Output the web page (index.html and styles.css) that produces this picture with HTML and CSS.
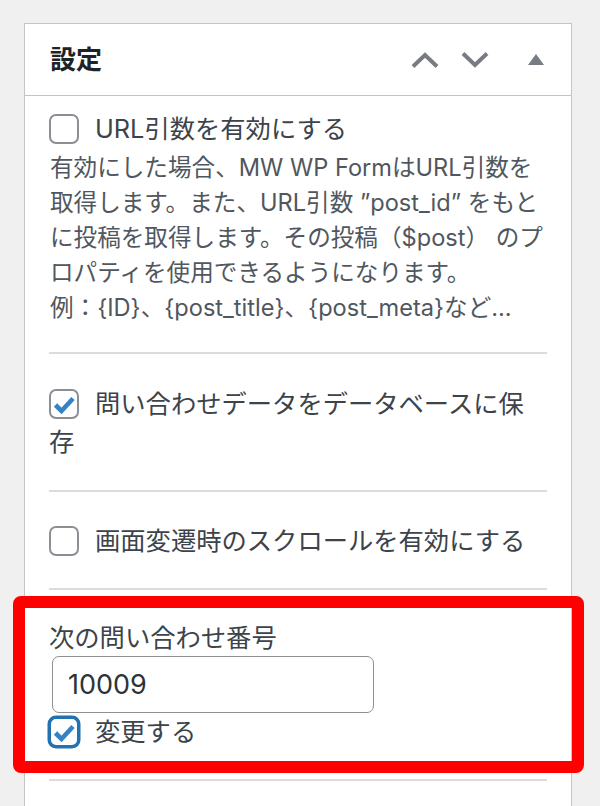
FILE: index.html
```html
<!DOCTYPE html>
<html lang="ja">
<head>
<meta charset="utf-8">
<title>設定</title>
<link rel="stylesheet" href="styles.css">
</head>
<body>
<div class="panel">
  <div class="hdr">
    <h2 class="title">設定</h2>
    <div class="ctrls">
      <svg class="ic ic-up" width="28" height="16" viewBox="0 0 28 16"><path d="M2 14.5 L14 3 L26 14.5" fill="none" stroke="#787c82" stroke-width="4"/></svg>
      <svg class="ic ic-down" width="28" height="16" viewBox="0 0 28 16"><path d="M2 1.5 L14 13 L26 1.5" fill="none" stroke="#787c82" stroke-width="4"/></svg>
      <svg class="ic ic-tri" width="18" height="16" viewBox="0 0 18 16"><polygon points="1,13 9,2 17,13" fill="#787c82"/></svg>
    </div>
  </div>
  <div class="inside">
    <div class="sec sec1">
      <div class="row"><span class="cb"></span><span class="lbl">URL引数を有効にする</span></div>
      <p class="desc">有効にした場合、MW WP FormはURL引数を<br>取得します。また、URL引数 ”post_id” をもと<br>に投稿を取得します。その投稿（$post） のプ<br>ロパティを使用できるようになります。<br>例：{ID}、{post_title}、{post_meta}など...</p>
    </div>
    <div class="sec sec2">
      <div class="row"><span class="cb on"><svg width="30" height="30" viewBox="0 0 30 30"><path d="M6.5 16 L12.5 22 L24 9.5" fill="none" stroke="#3582c4" stroke-width="4.6"/></svg></span><span class="lbl">問い合わせデータをデータベースに保<br>存</span></div>
    </div>
    <div class="sec sec3">
      <div class="row"><span class="cb"></span><span class="lbl">画面変遷時のスクロールを有効にする</span></div>
    </div>
    <div class="sec sec4">
      <div class="field-label">次の問い合わせ番号</div>
      <div class="input">10009</div>
      <div class="row"><span class="cb on focus"><svg width="30" height="30" viewBox="0 0 30 30"><path d="M6.5 16 L12.5 22 L24 9.5" fill="none" stroke="#3582c4" stroke-width="4.6"/></svg></span><span class="lbl">変更する</span></div>
      <div class="highlight"></div>
    </div>
    <div class="sec5"></div>
  </div>
</div>
</body>
</html>
```
FILE: styles.css
```css
* { box-sizing: border-box; }
html, body { margin: 0; padding: 0; }
body {
  background: #f0f0f1;
  font-family: Inter, "Noto Sans CJK JP", sans-serif;
  color: #3c434a;
  overflow: hidden;
}
.panel {
  margin: 23px 28px 0 24px;
  width: 548px;
  background: #fff;
  border: 1px solid #c3c4c7;
  border-bottom: none;
}
.hdr {
  height: 72px;
  border-bottom: 1px solid #c3c4c7;
  display: flex;
  align-items: center;
  padding: 0 26px 0 25px;
}
.title {
  margin: 0;
  font-size: 26px;
  font-weight: 700;
  color: #1d2327;
  line-height: 1;
}
.ctrls {
  margin-left: auto;
  display: flex;
  align-items: center;
}
.ic { display: block; }
.ic-down { margin-left: 22px; }
.ic-tri { margin-left: 38px; }

.sec {
  margin: 0 24px;
  border-bottom: 2px solid #dcdcde;
}
.row {
  font-size: 25.3px;
  line-height: 38px;
  white-space: nowrap;
}
.cb {
  display: inline-block;
  vertical-align: top;
  width: 30px;
  height: 30px;
  margin-top: 4px;
  margin-right: 16px;
  border: 2px solid #8c8f94;
  border-radius: 7px;
  background: #fff;
  position: relative;
}
.cb svg {
  position: absolute;
  left: -2px;
  top: -2px;
}
.cb.focus {
  border-color: #2271b1;
  box-shadow: 0 0 0 1.5px #2271b1;
}
.sec1 { padding: 14px 0 27px; }
.desc {
  margin: 2px 0 0 1px;
  font-size: 23.6px;
  line-height: 35.1px;
  white-space: nowrap;
  color: #50575e;
}
.sec2 { padding: 31px 0 29px; }
.sec3 { padding: 30px 0 28px; }
.sec4 {
  padding: 30px 0 28px;
  position: relative;
}
.field-label {
  font-size: 25.3px;
  line-height: 36px;
}
.input {
  margin-left: 3px;
  width: 322px;
  height: 57px;
  border: 1px solid #8c8f94;
  border-radius: 7px;
  padding-left: 15px;
  font-size: 27px;
  line-height: 55px;
  color: #2c3338;
}
.highlight {
  position: absolute;
  top: 6px;
  left: -36px;
  width: 571px;
  height: 177px;
  border: 12px solid #ff0000;
  border-radius: 8px;
}
.sec5 { height: 60px; }
```
